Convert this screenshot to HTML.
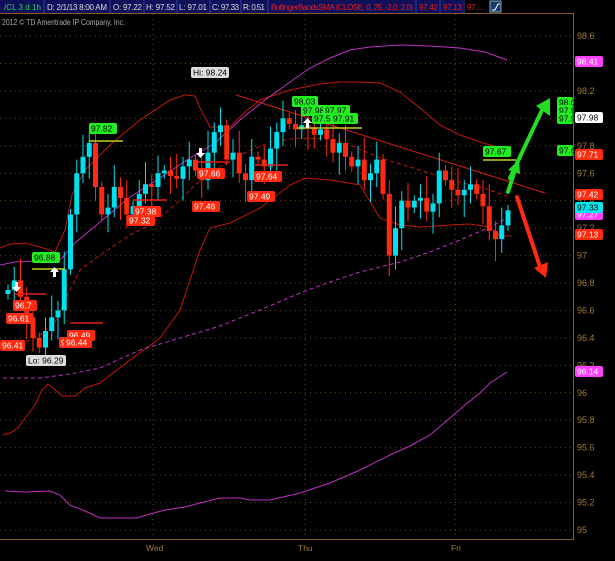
<!DOCTYPE html><html><head><style>
body{margin:0;background:#000;width:615px;height:556px;overflow:hidden;font-family:"Liberation Sans",sans-serif}
</style></head><body>
<svg id="s" width="615" height="556" xmlns="http://www.w3.org/2000/svg" font-family="Liberation Sans, sans-serif">
<rect width="615" height="556" fill="#000"/>
<rect x="0" y="0" width="463" height="13" fill="#10105a"/>
<g font-size="8" lengthAdjust="spacingAndGlyphs">
<text x="4" y="10" fill="#22dd44" textLength="37">/CL 3 d 1h</text>
<text x="47" y="10" fill="#ddd" textLength="60">D: 2/1/13 8:00 AM</text>
<text x="113" y="10" fill="#ddd" textLength="29">O: 97.22</text>
<text x="146" y="10" fill="#ddd" textLength="29">H: 97.52</text>
<text x="179" y="10" fill="#ddd" textLength="28">L: 97.01</text>
<text x="212" y="10" fill="#ddd" textLength="27">C: 97.33</text>
<text x="243" y="10" fill="#ddd" textLength="22">R: 0.51</text>
<text x="271" y="10" fill="#e02020" textLength="142">BollingerBandsSMA (CLOSE, 0, 25, -2.0, 2.0)</text>
<text x="419" y="10" fill="#e02020" textLength="19">97.42</text>
<text x="443" y="10" fill="#e02020" textLength="19">97.13</text>
<text x="467" y="10" fill="#e02020" textLength="16">97....</text>
</g>
<g stroke="#3040a0" stroke-width="1"><line x1="44" y1="0" x2="44" y2="13"/><line x1="110" y1="0" x2="110" y2="13"/><line x1="144" y1="0" x2="144" y2="13"/><line x1="177" y1="0" x2="177" y2="13"/><line x1="210" y1="0" x2="210" y2="13"/><line x1="241" y1="0" x2="241" y2="13"/><line x1="268" y1="0" x2="268" y2="13"/><line x1="416" y1="0" x2="416" y2="13"/><line x1="440" y1="0" x2="440" y2="13"/><line x1="464" y1="0" x2="464" y2="13"/></g>
<rect x="490" y="1" width="11" height="11" fill="#1a3a6a" stroke="#8ab" stroke-width="1"/>
<path d="M492 10h3l3-6h2" stroke="#fff" fill="none" stroke-width="1"/>
<line x1="0" y1="13.5" x2="573" y2="13.5" stroke="#8a5a20"/>
<text x="2" y="25" font-size="8" fill="#aaa" textLength="123" lengthAdjust="spacingAndGlyphs">2012 © TD Ameritrade IP Company, Inc.</text>
<line x1="573.5" y1="13" x2="573.5" y2="540" stroke="#8a5a20"/>
<line x1="0" y1="539.5" x2="573" y2="539.5" stroke="#8a5a20"/>
<g id="grid" stroke="#6a4a18" stroke-dasharray="1 4"></g>
<g id="axl" font-size="9" fill="#a07838"></g>
<text x="146" y="551" font-size="8.5" fill="#a07838">Wed</text>
<text x="298" y="551" font-size="8.5" fill="#a07838">Thu</text>
<text x="451" y="551" font-size="8.5" fill="#a07838">Fri</text>
<g fill="none" stroke-width="1">
<polyline stroke="#c01808" points="0,248 10,244 25,243 40,247 55,252 65,230 72,195 85,170 110,145 140,120 170,100 185,95 195,96 200,108 210,127 230,127 245,112 260,100 290,90 320,84 340,82 360,82 380,83 400,92 420,108 440,125 460,135 480,142 500,148 512,152"/>
<polyline stroke="#c01808" points="3,435 10,433 18,428 25,418 35,405 42,390 48,384 55,390 62,396 75,396 85,388 100,383 130,360 160,338 180,310 200,250 210,228 230,223 260,208 290,185 305,178 330,180 360,185 380,218 400,225 420,227 450,225 470,224 490,227 500,236 512,236"/>
<polyline stroke="#c01808" stroke-dasharray="4 3" points="20,345 40,335 55,322 65,300 80,270 100,255 130,235 150,225 175,205 195,185 215,170 240,155 270,142 300,138 330,139 350,145 380,158 420,170 450,180 480,187 507,196"/>
<polyline stroke="#c030c0" points="0,265 15,262 35,261 55,262 62,258 75,243 100,222 130,197 160,178 190,158 215,143 240,120 265,100 290,82 310,68 330,58 350,50 370,47 400,45 430,46 460,48 485,52 507,60"/>
<polyline stroke="#c030c0" stroke-dasharray="4 3" points="3,378 40,378 70,374 100,368 140,350 180,338 220,326 260,310 300,293 330,282 360,272 400,262 430,252 460,240 490,227 507,218"/>
<polyline stroke="#c030c0" points="5,491 25,492 50,491 60,495 70,505 85,511 100,518 120,518 137,518 150,514 165,510 185,507 200,503 220,498 240,498 250,500 270,500 300,493 330,483 360,470 390,455 410,446 430,435 450,418 465,405 480,393 490,383 507,372"/>
<line x1="236" y1="95" x2="545" y2="193" stroke="#d02010"/>
</g>
<g id="c"></g>
<g stroke-width="1.5">
<line x1="89" y1="141" x2="123" y2="141" stroke="#c0d020"/>
<line x1="32" y1="269" x2="65" y2="269" stroke="#c0d020"/>
<line x1="297" y1="128" x2="362" y2="128" stroke="#c0d020"/>
<line x1="483" y1="160" x2="516" y2="160" stroke="#c0d020"/>
<line x1="13" y1="294" x2="46" y2="294" stroke="#e02010"/>
<line x1="133" y1="200" x2="167" y2="200" stroke="#e02010"/>
<line x1="198" y1="162" x2="230" y2="162" stroke="#e02010"/>
<line x1="255" y1="165" x2="288" y2="165" stroke="#e02010"/>
<line x1="70" y1="323" x2="103" y2="323" stroke="#e02010"/>
</g>
<g id="tags" font-size="8.5"></g>
<g stroke-linecap="round" stroke-width="4" fill="none">
<path d="M510 178 L543 108" stroke="#22dd22"/>
<path d="M508 192 L515 170" stroke="#22dd22"/>
<path d="M517 197 L541 270" stroke="#ff2a10"/>
</g>
<path d="M536 106 L550 98 L550 116 Z" fill="#22dd22"/>
<path d="M508 170 L519 160 L520 174 Z" fill="#22dd22"/>
<path d="M534 268 L546 278 L548 262 Z" fill="#ff2a10"/>
<g fill="#fff">
<path d="M15 282h3v5h3l-4.5 5-4.5-5h3z"/><path d="M199 148h3v5h3l-4.5 5-4.5-5h3z"/>
<path d="M53 277h3v-5h3l-4.5-5-4.5 5h3z"/><path d="M306 128h3v-5h3l-4.5-5-4.5 5h3z"/>
</g>
</svg>
<script>
var S='http://www.w3.org/2000/svg';
function Y(p){return 530-(p-95)*137.2;}
function el(t,a,par){var e=document.createElementNS(S,t);for(var k in a)e.setAttribute(k,a[k]);(par||document.getElementById('s')).appendChild(e);return e;}
var g=document.getElementById('grid'),ax=document.getElementById('axl');
for(var p=95;p<=98.61;p+=0.2){var y=Y(p);el('line',{x1:0,y1:y,x2:573,y2:y},g);el('text',{x:577,y:y+3},ax).textContent=(Math.round(p*10)/10).toString();}
[153,305,455].forEach(function(x){el('line',{x1:x,y1:14,x2:x,y2:539},g);});
var cl=[96.75,96.82,96.7,96.55,96.4,96.33,96.45,96.55,96.6,96.9,97.3,97.6,97.72,97.82,97.5,97.3,97.35,97.5,97.42,97.3,97.36,97.45,97.52,97.5,97.6,97.62,97.58,97.56,97.65,97.7,97.62,97.55,97.75,97.9,97.95,97.7,97.75,97.6,97.55,97.72,97.7,97.65,97.78,97.9,98.0,97.96,97.92,97.95,97.93,97.88,97.92,97.85,97.75,97.82,97.72,97.65,97.7,97.55,97.6,97.7,97.45,97.0,97.2,97.4,97.35,97.4,97.42,97.32,97.38,97.62,97.55,97.48,97.44,97.48,97.52,97.45,97.36,97.18,97.12,97.22,97.33];
var c=document.getElementById('c'),n=cl.length,x0=8,dx=(508-8)/(n-1),o=96.72;
for(var i=0;i<n;i++){var x=x0+i*dx,cc=cl[i],up=cc>=o,col=up?'#00e0ee':'#ff2a10';
var hi=Math.max(o,cc)+0.04+((i*7)%5)*0.03,lo=Math.min(o,cc)-0.04-((i*3)%5)*0.03;
if(i==61)lo=96.85;if(i==62)lo=96.9;
el('line',{x1:x,y1:Y(hi),x2:x,y2:Y(lo),stroke:col,'stroke-width':1},c);
var t=Y(Math.max(o,cc)),b=Y(Math.min(o,cc));if(b-t<1.5)b=t+1.5;
el('rect',{x:x-2.5,y:t,width:5,height:b-t,fill:col},c);o=cc;}
var tg=document.getElementById('tags');
function tag(x,y,w,txt,bg,fg){el('rect',{x:x,y:y,width:w,height:11,rx:2,fill:bg},tg);el('text',{x:x+2,y:y+8.5,fill:fg},tg).textContent=txt;}
var G='#22ee22',R='#ff2a10';
tag(89,123,28,'97.82',G,'#000');tag(32,252,28,'96.88',G,'#000');
tag(292,96,26,'98.03',G,'#000');tag(301,105,26,'97.98',G,'#000');tag(323,105,27,'97.97',G,'#000');tag(312,113,22,'97.5',G,'#000');tag(331,113,27,'97.91',G,'#000');
tag(483,146,28,'97.67',G,'#000');
tag(557,97,16,'98.0',G,'#000');tag(557,105,16,'97.9',G,'#000');tag(557,113,16,'97.9',G,'#000');tag(557,145,16,'97.6',G,'#000');
tag(13,300,24,'96.7',R,'#fff');tag(6,313,27,'96.61',R,'#fff');tag(0,340,25,'96.41',R,'#fff');
tag(67,330,28,'96.49',R,'#fff');tag(59,337,8,'9',R,'#fff');tag(64,337,28,'96.44',R,'#fff');
tag(133,206,28,'97.38',R,'#fff');tag(127,215,28,'97.32',R,'#fff');
tag(192,201,28,'97.46',R,'#fff');tag(197,168,28,'97.66',R,'#fff');
tag(254,171,28,'97.64',R,'#fff');tag(247,191,28,'97.49',R,'#fff');
tag(191,67,38,'Hi: 98.24','#ddd','#000');tag(26,355,40,'Lo: 96.29','#ddd','#000');
tag(575,112,28,'97.98','#fff','#000');tag(575,149,28,'97.71',R,'#fff');
tag(575,189,28,'97.42',R,'#fff');tag(575,209,28,'97.27','#ff40ff','#fff');tag(575,202,28,'97.33','#00e8f0','#000');
tag(575,229,28,'97.13',R,'#fff');tag(575,56,28,'98.41','#ff40ff','#fff');tag(575,366,28,'96.14','#ff40ff','#fff');
</script>
</body></html>
